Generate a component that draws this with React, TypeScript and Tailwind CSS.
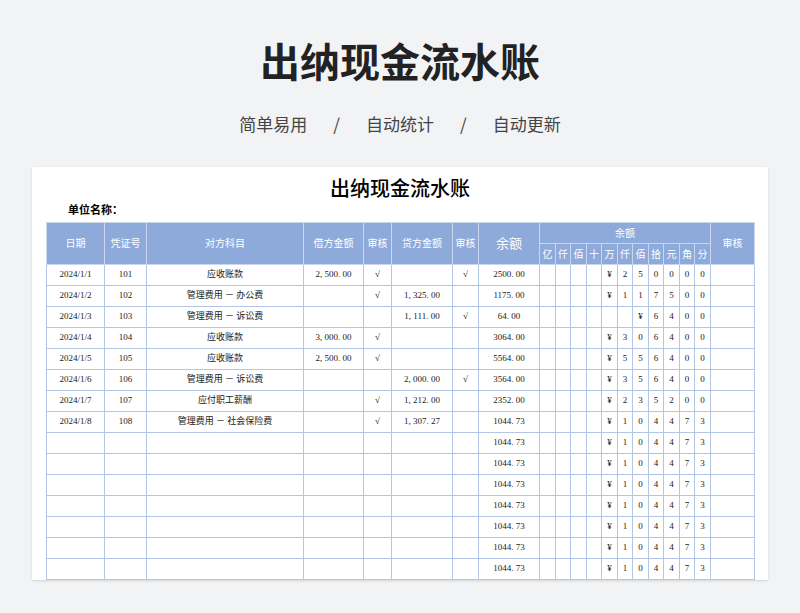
import React from 'react'

const rows = [
  ['2024/1/1', '101', '应收账款', '2, 500. 00', '√', '', '√', '2500. 00'],
  ['2024/1/2', '102', '管理费用 － 办公费', '', '√', '1, 325. 00', '', '1175. 00'],
  ['2024/1/3', '103', '管理费用 － 诉讼费', '', '', '1, 111. 00', '√', '64. 00'],
  ['2024/1/4', '104', '应收账款', '3, 000. 00', '√', '', '', '3064. 00'],
  ['2024/1/5', '105', '应收账款', '2, 500. 00', '√', '', '', '5564. 00'],
  ['2024/1/6', '106', '管理费用 － 诉讼费', '', '', '2, 000. 00', '√', '3564. 00'],
  ['2024/1/7', '107', '应付职工薪酬', '', '√', '1, 212. 00', '', '2352. 00'],
  ['2024/1/8', '108', '管理费用 － 社会保险费', '', '√', '1, 307. 27', '', '1044. 73'],
  ...Array.from({ length: 7 }, () => ['', '', '', '', '', '', '', '1044. 73']),
]

const units = ['亿', '仟', '佰', '十', '万', '仟', '佰', '拾', '元', '角', '分']
const widths = [58, 42, 157, 60, 28, 61, 26, 61, 16, 15, 16, 15, 16, 15, 16, 15, 16, 15, 16, 44]

function digitCells(v: string) {
  const d = ('¥' + v.replace('. ', '')).split('')
  const cells = Array(11).fill('')
  d.forEach((c, i) => (cells[11 - d.length + i] = c))
  return cells
}

const cell = 'border border-[#b4c6e7] text-center'
const head = 'border border-[#c9d6ee] text-center text-white font-normal'

export default function App() {
  return (
    <div className="w-[800px] h-[613px] overflow-hidden bg-[#f2f3f5]" style={{ fontFamily: '"Noto Sans CJK SC", sans-serif' }}>
      <h1 className="pt-[36px] text-center text-[40px] font-bold leading-[48px] text-[#222]">出纳现金流水账</h1>
      <div className="mt-[28px] flex justify-center gap-[26px] text-[17px] leading-[24px] text-[#444]">
        <span>简单易用</span><span>/</span><span>自动统计</span><span>/</span><span>自动更新</span>
      </div>
      <div className="mx-[32px] mt-[31px] h-[413px] overflow-hidden bg-white px-[14px] shadow-sm" style={{ fontFamily: '"Liberation Serif", "Noto Sans CJK SC", serif' }}>
        <div className="pt-[10px] text-center text-[20px] font-medium leading-[24px] text-black">出纳现金流水账</div>
        <div className="ml-[22px] h-[21px] text-[11px] font-bold leading-[18px] text-black">单位名称：</div>
        <table className="table-fixed border-collapse text-[9px] text-[#222]" style={{ width: 708 }}>
          <colgroup>{widths.map((w, i) => <col key={i} style={{ width: w }} />)}</colgroup>
          <thead className="bg-[#8eaadb]">
            <tr className="h-[21px]">
              {['日期', '凭证号', '对方科目', '借方金额', '审核', '贷方金额', '审核'].map((t, i) => (
                <th key={i} rowSpan={2} className={`${head} text-[10px]`}>{t}</th>
              ))}
              <th rowSpan={2} className={`${head} text-[13px]`}>余额</th>
              <th colSpan={11} className={`${head} text-[10px]`}>余额</th>
              <th rowSpan={2} className={`${head} text-[10px]`}>审核</th>
            </tr>
            <tr className="h-[21px]">
              {units.map((u, i) => <th key={i} className={`${head} text-[10px] p-0`}>{u}</th>)}
            </tr>
          </thead>
          <tbody>
            {rows.map((r, i) => (
              <tr key={i} className="h-[21px]">
                {r.map((c, j) => <td key={j} className={`${cell} p-0 whitespace-pre`}>{c}</td>)}
                {digitCells(r[7]).map((c, j) => <td key={'d' + j} className={`${cell} p-0`}>{c}</td>)}
                <td className={cell}></td>
              </tr>
            ))}
          </tbody>
        </table>
      </div>
    </div>
  )
}
